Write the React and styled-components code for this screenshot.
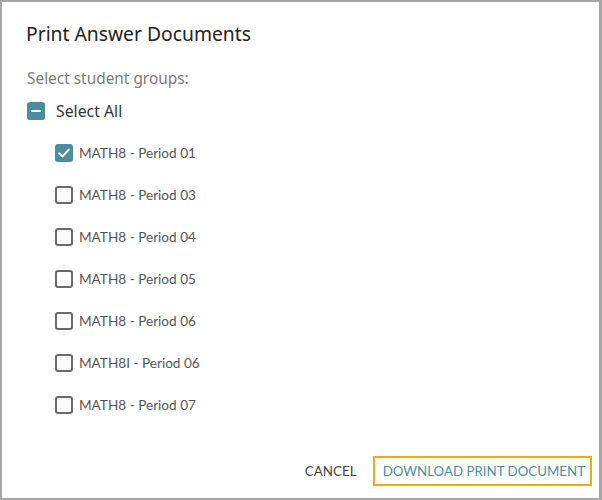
import React, { useState } from 'react';
import styled, { createGlobalStyle } from 'styled-components';

const GlobalStyle = createGlobalStyle`
  html, body {
    margin: 0;
    padding: 0;
    background: #fff;
  }
  body {
    font-family: Lato, "Noto Sans", sans-serif;
  }
  * {
    box-sizing: border-box;
  }
`;

const groups = [
  { id: 1, name: 'MATH8 - Period 01', checked: true },
  { id: 2, name: 'MATH8 - Period 03', checked: false },
  { id: 3, name: 'MATH8 - Period 04', checked: false },
  { id: 4, name: 'MATH8 - Period 05', checked: false },
  { id: 5, name: 'MATH8 - Period 06', checked: false },
  { id: 6, name: 'MATH8I - Period 06', checked: false },
  { id: 7, name: 'MATH8 - Period 07', checked: false },
];

const Box = ({ state }) => (
  <CheckBox $filled={state !== 'off'}>
    {state === 'on' && (
      <svg width="14" height="14" viewBox="0 0 14 14">
        <path d="M2.2 7.2 L5.6 10.4 L11.8 3.6" fill="none" stroke="#fff" strokeWidth="2" strokeLinecap="round" strokeLinejoin="round" />
      </svg>
    )}
    {state === 'some' && <Dash />}
  </CheckBox>
);

const App = () => {
  const [items, setItems] = useState(groups);
  const count = items.filter((g) => g.checked).length;
  const allState = count === 0 ? 'off' : count === items.length ? 'on' : 'some';

  const toggle = (id) =>
    setItems(items.map((g) => (g.id === id ? { ...g, checked: !g.checked } : g)));
  const toggleAll = () =>
    setItems(items.map((g) => ({ ...g, checked: allState !== 'on' })));

  return (
    <>
      <GlobalStyle />
      <Dialog>
        <Title>Print Answer Documents</Title>
        <Body>
          <Hint>Select student groups:</Hint>
          <AllRow onClick={toggleAll}>
            <Box state={allState} />
            <AllLabel>Select All</AllLabel>
          </AllRow>
          <List>
            {items.map((g) => (
              <GroupRow key={g.id} onClick={() => toggle(g.id)}>
                <Box state={g.checked ? 'on' : 'off'} />
                <GroupLabel>{g.name}</GroupLabel>
              </GroupRow>
            ))}
          </List>
        </Body>
        <Footer>
          <TextButton>CANCEL</TextButton>
          <PrimaryButton>DOWNLOAD PRINT DOCUMENT</PrimaryButton>
        </Footer>
      </Dialog>
    </>
  );
};

const Dialog = styled.div`
  width: 602px;
  height: 500px;
  border: 2px solid #a6a6a6;
  border-right-width: 3px;
  background: #fff;
  display: flex;
  flex-direction: column;
`;

const Title = styled.h2`
  margin: 0;
  padding: 19px 24px 0;
  font-family: "Noto Sans", sans-serif;
  font-size: 19.3px;
  font-weight: 400;
  color: #222;
  line-height: 26px;
`;

const Body = styled.div`
  flex: 1;
  padding: 20px 24px 0 25px;
`;

const Hint = styled.div`
  font-family: "Noto Sans", sans-serif;
  font-size: 15.4px;
  color: #7a7a7a;
  line-height: 18px;
  padding-top: 3px;
`;

const AllRow = styled.label`
  display: flex;
  align-items: center;
  gap: 11px;
  margin-top: 14px;
  height: 18px;
  cursor: pointer;
`;

const AllLabel = styled.span`
  font-family: "Noto Sans", sans-serif;
  font-size: 15.8px;
  color: #333;
`;

const List = styled.div`
  display: flex;
  flex-direction: column;
  gap: 24px;
  padding: 24px 0 0 28px;
`;

const GroupRow = styled.label`
  display: flex;
  align-items: center;
  gap: 6px;
  height: 18px;
  cursor: pointer;
`;

const GroupLabel = styled.span`
  font-size: 13.6px;
  color: #555;
`;

const CheckBox = styled.span`
  width: 18px;
  height: 18px;
  border-radius: 3px;
  flex-shrink: 0;
  display: flex;
  align-items: center;
  justify-content: center;
  background: ${({ $filled }) => ($filled ? '#4a8d9d' : '#fff')};
  border: ${({ $filled }) => ($filled ? 'none' : '2px solid #6a6a6a')};
`;

const Dash = styled.span`
  width: 10px;
  height: 2px;
  background: #fff;
`;

const Footer = styled.div`
  display: flex;
  justify-content: flex-end;
  align-items: center;
  gap: 16px;
  padding: 0 7px 12px 0;
`;

const TextButton = styled.button`
  background: none;
  border: none;
  font-family: inherit;
  font-size: 13.4px;
  color: #444;
  padding: 0;
  cursor: pointer;
`;

const PrimaryButton = styled.button`
  background: #fff;
  border: 2px solid #f4a90a;
  font-family: inherit;
  font-size: 13.3px;
  color: #4a8d9d;
  height: 30px;
  padding: 0 5px 0 8px;
  cursor: pointer;
`;

export default App;
